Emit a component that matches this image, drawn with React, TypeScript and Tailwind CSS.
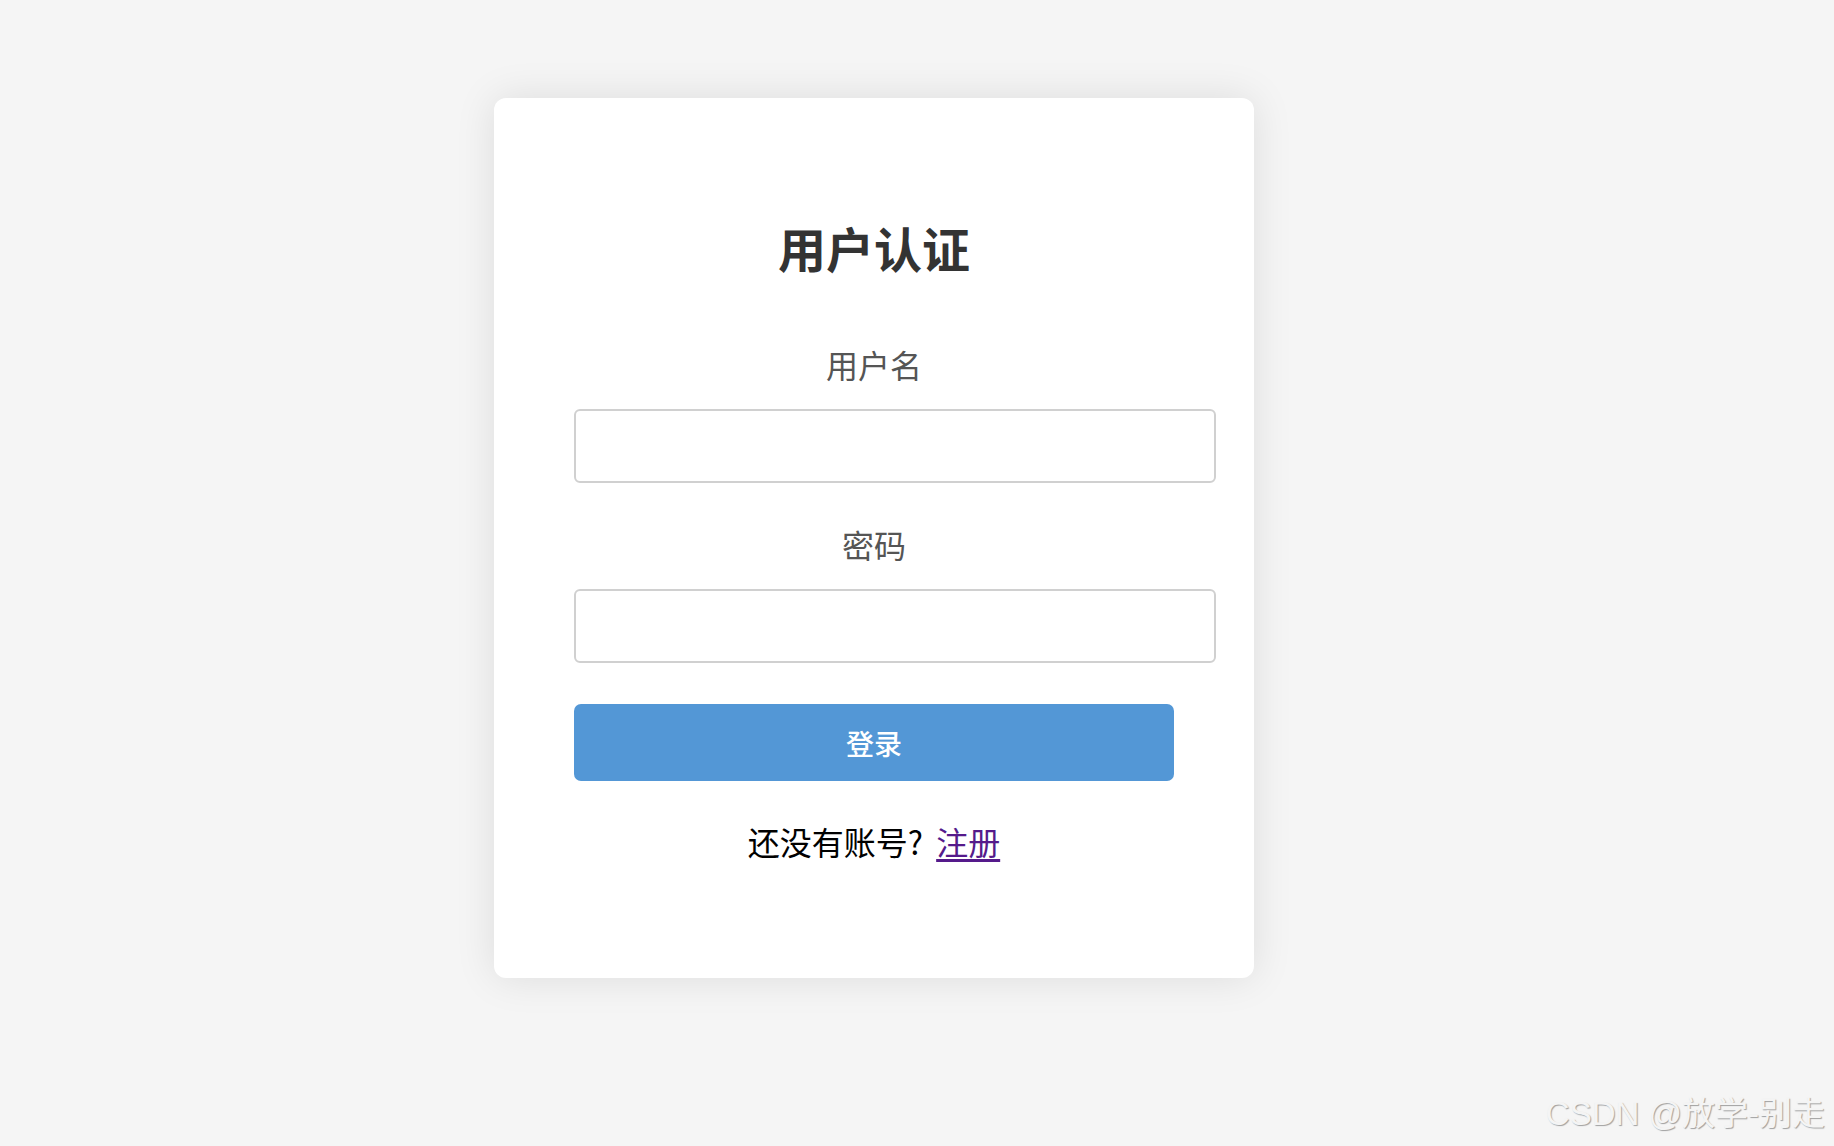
import { useState } from 'react';

const cjk = '"Noto Sans CJK SC", "Noto Sans", sans-serif';

export default function App() {
  const [username, setUsername] = useState('');
  const [password, setPassword] = useState('');

  return (
    <div
      className="relative w-full h-[1146px] overflow-hidden bg-[#f5f5f5]"
      style={{ fontFamily: cjk }}
    >
      <div className="ml-[494px] pt-[98px]">
        <div className="w-[760px] h-[880px] bg-white rounded-[12px] shadow-[0_0_40px_rgba(0,0,0,0.1)] px-[80px] pt-[80px]">
          <h2 className="mt-[41px] text-center text-[48px] leading-[56px] font-bold text-[#333333]">
            用户认证
          </h2>

          <div className="mt-[69px]">
            <label className="block text-center text-[32px] leading-[40px] text-[#555555]">用户名</label>
            <input
              type="text"
              value={username}
              onChange={e => setUsername(e.target.value)}
              className="mt-[25px] block w-[642px] h-[74px] px-[20px] border-2 border-[#d0d0d0] rounded-[6px] bg-white text-[28px] outline-none"
            />
          </div>

          <div className="mt-[41px]">
            <label className="block text-center text-[32px] leading-[40px] text-[#555555]">密码</label>
            <input
              type="password"
              value={password}
              onChange={e => setPassword(e.target.value)}
              className="mt-[25px] block w-[642px] h-[74px] px-[20px] border-2 border-[#d0d0d0] rounded-[6px] bg-white text-[28px] outline-none"
            />
          </div>

          <button className="mt-[41px] block w-[600px] h-[77px] rounded-[7px] bg-[#5397d6] text-white text-[28px] font-medium">
            登录
          </button>

          <p className="mt-[40px] text-center text-[32px] leading-[40px] text-black">
            还没有账号?{' '}
            <a href="#" className="ml-[6px] text-[#551a8b] underline underline-offset-[4px]">注册</a>
          </p>
        </div>
      </div>

      <div
        className="absolute right-[9px] bottom-[12px] text-[33px] leading-[40px] text-[#f4f4f4] [text-shadow:1px_1px_1px_rgba(0,0,0,0.35)]"
        style={{ fontFamily: '"Liberation Sans", "Noto Sans CJK SC", sans-serif' }}
      >
        CSDN @放学-别走
      </div>
    </div>
  );
}
